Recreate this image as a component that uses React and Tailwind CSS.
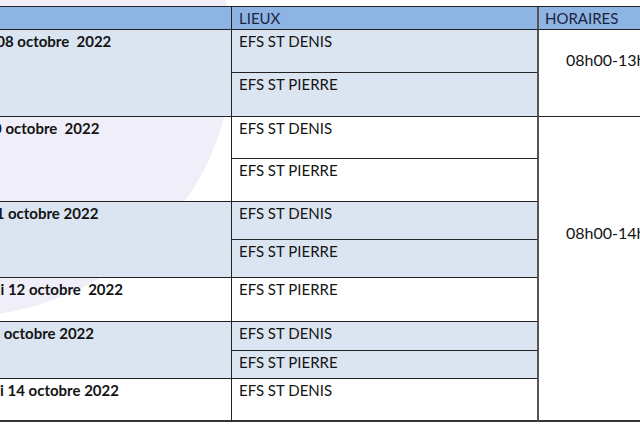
const groups = [
  { date: "Samedi 08 octobre  2022", blue: true, lieux: ["EFS ST DENIS", "EFS ST PIERRE"], span: "row-span-2" },
  { date: "Lundi 10 octobre  2022", blue: false, lieux: ["EFS ST DENIS", "EFS ST PIERRE"], span: "row-span-2" },
  { date: "Mardi 11 octobre 2022", blue: true, lieux: ["EFS ST DENIS", "EFS ST PIERRE"], span: "row-span-2" },
  { date: "Mercredi 12 octobre  2022", blue: false, lieux: ["EFS ST PIERRE"], span: "row-span-1" },
  { date: "Jeudi 13 octobre 2022", blue: true, lieux: ["EFS ST DENIS", "EFS ST PIERRE"], span: "row-span-2" },
  { date: "Vendredi 14 octobre 2022", blue: false, lieux: ["EFS ST DENIS"], span: "row-span-1", last: true },
];

export default function App() {
  let rowStart = 2;
  const cells = [];
  groups.forEach((g, gi) => {
    const bg = g.blue ? "bg-[#dbe5f1]" : "bg-transparent";
    const bottom = g.last ? "border-b-2 border-b-[#333]" : "border-b border-b-[#222]";
    cells.push(
      <div
        key={"d" + gi}
        className={`${g.span} col-start-1 ${bg} ${bottom} border-r border-r-[#222] pl-[7px] pt-[2px] font-bold text-[15px] leading-[18px] text-[#141414] whitespace-pre`}
        style={{ gridRowStart: rowStart }}
      >
        {g.date}
      </div>
    );
    g.lieux.forEach((l, li) => {
      const isLast = g.last && li === g.lieux.length - 1;
      cells.push(
        <div
          key={"l" + gi + li}
          className={`col-start-2 ${bg} ${isLast ? "border-b-2 border-b-[#333]" : "border-b border-b-[#222]"} pl-[7px] pt-[2px] text-[15px] leading-[18px] text-[#141414]`}
          style={{ gridRowStart: rowStart + li }}
        >
          {l}
        </div>
      );
    });
    rowStart += g.lieux.length;
  });

  return (
    <div className="relative w-[640px] h-[427px] overflow-hidden bg-white font-['Lato',sans-serif]">
      <svg className="absolute left-0 top-0" width="640" height="427">
        <ellipse cx="-45" cy="55" rx="277" ry="262" fill="#f0eef8" />
      </svg>
      <div className="relative -ml-[63px] mt-[6px] grid w-max grid-cols-[295px_305px_140px] grid-rows-[23px_43px_44px_42px_43px_38px_38px_44px_29px_28px_43px] border-t border-t-[#222]">
        <div className="col-start-1 row-start-1 bg-[#8eb4e3] border-b border-b-[#222] border-r border-r-[#222] pl-[7px] pt-[2px] text-[15px] leading-[18px] text-[#1c2440]">
          DATES
        </div>
        <div className="col-start-2 row-start-1 bg-[#8eb4e3] border-b border-b-[#222] pl-[7px] pt-[2px] text-[15px] leading-[18px] text-[#1c2440]">
          LIEUX
        </div>
        <div className="col-start-3 row-start-1 bg-[#8eb4e3] border-b border-b-[#222] border-l-2 border-l-[#555] pl-[6px] pt-[2px] text-[15px] leading-[18px] text-[#1c2440]">
          HORAIRES
        </div>
        {cells}
        <div className="col-start-3 row-start-2 row-span-2 bg-white border-b border-b-[#222] border-l-2 border-l-[#555] pl-[27px] pt-[21px] text-[16px] leading-[18px] text-[#141414] whitespace-nowrap">
          08h00-13h00
        </div>
        <div className="col-start-3 row-start-4 row-span-8 bg-white border-b-2 border-b-[#333] border-l-2 border-l-[#555] pl-[27px] pt-[107px] text-[16px] leading-[18px] text-[#141414] whitespace-nowrap">
          08h00-14h00
        </div>
      </div>
    </div>
  );
}
